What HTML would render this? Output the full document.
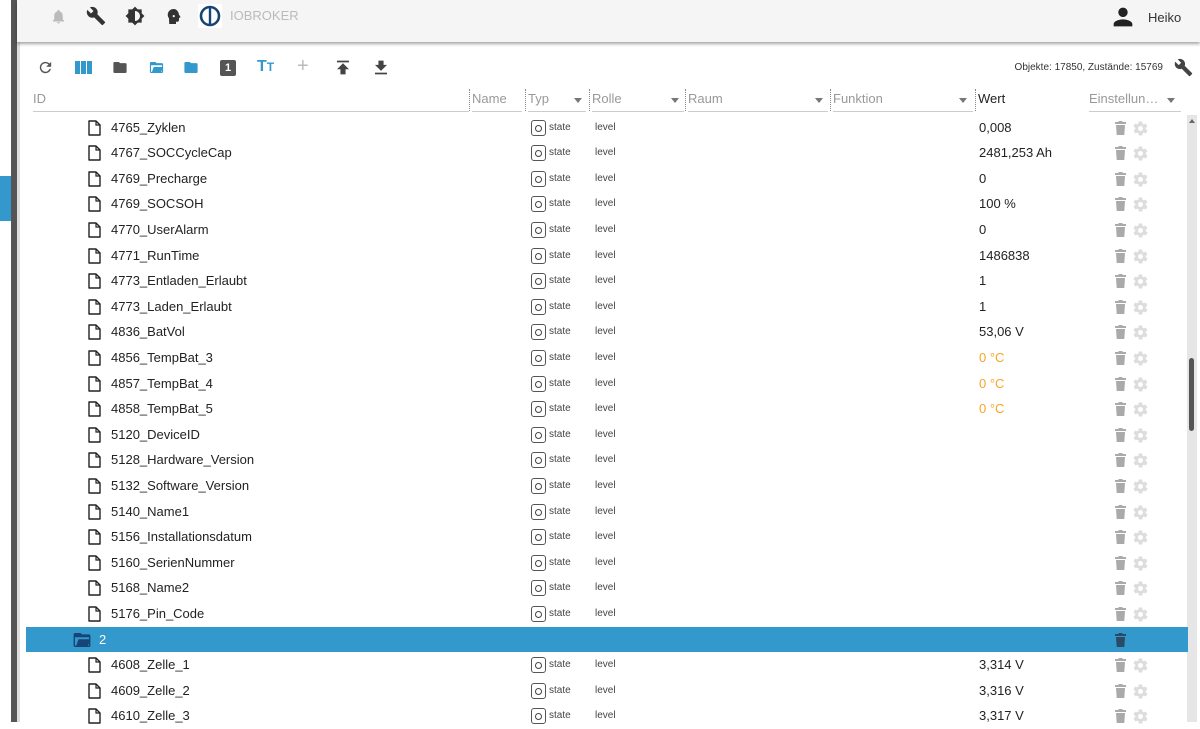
<!DOCTYPE html>
<html><head><meta charset="utf-8">
<style>
*{margin:0;padding:0;box-sizing:border-box}
body{width:1200px;height:722px;overflow:hidden;background:#fff;font-family:"Liberation Sans",sans-serif;position:relative;color:#222}
.a{position:absolute}
.hdr{left:17px;top:0;width:1183px;height:42px;background:#f5f5f5;box-shadow:0 2px 3px rgba(0,0,0,.35)}
.row{position:absolute;left:0;width:1200px;height:25.6px}
.fi{position:absolute;left:88px;top:5px}
.nm{position:absolute;left:111px;top:5px;font-size:13px;color:#222}
.tb{position:absolute;left:531px;top:5px;width:15px;height:16px;border:1px solid #555;border-radius:3px}
.tb:after{content:"";position:absolute;left:3px;top:4px;width:5px;height:5px;border:1px solid #444;border-radius:50%}
.st{position:absolute;left:549px;top:7px;font-size:10px;color:#444}
.lv{position:absolute;left:595px;top:7px;font-size:10px;color:#444}
.vl{position:absolute;left:979px;top:5px;font-size:13px;color:#222}
.tr{position:absolute;left:1115px;top:6px}
.gr{position:absolute;left:1132px;top:5px}
.hd{position:absolute;top:91px;font-size:13px;color:#999;border-bottom:1px solid #ccc;height:21px}
.dv{position:absolute;top:89px;height:22px;border-left:1px dotted #888}
.ar{position:absolute;top:98px;width:0;height:0;border-left:4px solid transparent;border-right:4px solid transparent;border-top:5px solid #777}
</style></head><body>
<div class="a" style="left:0;top:176px;width:11px;height:45px;background:#3399cc"></div>
<div class="a" style="left:11px;top:0;width:6px;height:722px;background:#555"></div>
<div class="a" style="left:17px;top:0;width:3px;height:722px;background:#ddd"></div>
<div class="a hdr"></div>
<svg class="a" style="left:50px;top:7px" width="17" height="19" viewBox="0 0 24 24"><path fill="#bbb" d="M12 22c1.1 0 2-.9 2-2h-4c0 1.1.9 2 2 2zm6-6v-5c0-3.1-1.6-5.6-4.5-6.3V4c0-.8-.7-1.5-1.5-1.5s-1.5.7-1.5 1.5v.7C7.6 5.4 6 7.9 6 11v5l-2 2v1h16v-1l-2-2z"/></svg>
<svg class="a" style="left:86px;top:6px" width="20" height="20" viewBox="0 0 24 24"><path fill="#333" d="M22.7 19l-9.1-9.1c.9-2.3.4-5-1.5-6.9-2-2-5-2.4-7.4-1.3L9 6 6 9 1.6 4.7C.4 7.1.9 10.1 2.9 12.1c1.9 1.9 4.6 2.4 6.9 1.5l9.1 9.1c.4.4 1 .4 1.4 0l2.3-2.3c.5-.4.5-1.1.1-1.4z"/></svg>
<svg class="a" style="left:125px;top:6px" width="20" height="20" viewBox="0 0 24 24"><path fill="#333" d="M20 8.7V4h-4.7L12 .7 8.7 4H4v4.7L.7 12 4 15.3V20h4.7l3.3 3.3 3.3-3.3H20v-4.7l3.3-3.3L20 8.7zM12 18V6c3.3 0 6 2.7 6 6s-2.7 6-6 6z"/></svg>
<svg class="a" style="left:164px;top:6px" width="18" height="21" viewBox="0 0 24 24"><path fill="#333" d="M13 2C8.5 2 5 5.3 5 9.6c0 2 .7 3.4 1.6 4.8L7 22h9v-3h2c1.1 0 2-.9 2-2v-3l1.5-.6c.4-.2.5-.6.3-1L20 9.5C19.4 5.3 16.6 2 13 2zm0 11a1.5 1.5 0 1 1 0-3 1.5 1.5 0 0 1 0 3z"/></svg>
<div class="a" style="left:198px;top:4px;width:24px;height:24px;background:#fff"></div>
<svg class="a" style="left:199px;top:5px" width="22" height="22" viewBox="0 0 22 22"><circle cx="11" cy="11" r="9" fill="none" stroke="#164477" stroke-width="2.6"/><rect x="9.8" y="3" width="2.4" height="16" fill="#164477"/></svg>
<div class="a" style="left:230px;top:8px;font-size:13px;color:#bbb">IOBROKER</div>
<svg class="a" style="left:1109px;top:3px" width="28" height="28" viewBox="0 0 24 24"><path fill="#222" d="M12 12c2.2 0 4-1.8 4-4s-1.8-4-4-4-4 1.8-4 4 1.8 4 4 4zm0 2c-2.7 0-8 1.3-8 4v2h16v-2c0-2.7-5.3-4-8-4z"/></svg>
<div class="a" style="left:1148px;top:10px;font-size:13px;color:#333">Heiko</div>
<svg class="a" style="left:37px;top:59px" width="17" height="17" viewBox="0 0 24 24"><path fill="#555" d="M17.6 6.4A8 8 0 1 0 19.7 14h-2.1A6 6 0 1 1 12 6c1.7 0 3.1.7 4.2 1.8L13 11h7V4l-2.4 2.4z"/></svg>
<svg class="a" style="left:75px;top:61px" width="17" height="13" viewBox="0 0 17 13"><rect x="0" width="5" height="13" fill="#3399cc"/><rect x="6" width="5" height="13" fill="#3399cc"/><rect x="12" width="5" height="13" fill="#3399cc"/></svg>
<svg class="a" style="left:113px;top:62px" width="14" height="11" viewBox="0 0 24 20"><path fill="#555" d="M10 0H2C.9 0 0 .9 0 2v16c0 1.1.9 2 2 2h20c1.1 0 2-.9 2-2V4c0-1.1-.9-2-2-2H12L10 0z"/></svg>
<svg class="a" style="left:149px;top:62px" width="15" height="11" viewBox="0 0 24 20"><path fill="#3399cc" d="M22 2H12L10 0H2C.9 0 0 .9 0 2v16c0 1.1.9 2 2 2h20c1.1 0 2-.9 2-2V4c0-1.1-.9-2-2-2zm0 16H2V6h20v12z"/><path fill="#3399cc" d="M3 20l4-11h17l-4 11z"/></svg>
<svg class="a" style="left:184px;top:62px" width="14" height="11" viewBox="0 0 24 20"><path fill="#3399cc" d="M10 0H2C.9 0 0 .9 0 2v16c0 1.1.9 2 2 2h20c1.1 0 2-.9 2-2V4c0-1.1-.9-2-2-2H12L10 0z"/></svg>
<div class="a" style="left:220px;top:60px;width:16px;height:16px;background:#555;border-radius:2px;color:#fff;font-size:11px;font-weight:bold;text-align:center;line-height:16px">1</div>
<div class="a" style="left:257px;top:58px;font-size:16px;font-weight:bold;color:#3399cc">T<span style="font-size:12px">T</span></div>
<div class="a" style="left:297px;top:55px;font-size:20px;color:#bbb">+</div>
<svg class="a" style="left:337px;top:60px" width="12" height="15" viewBox="0 0 14 16"><rect x="0" y="0" width="14" height="2" fill="#444"/><path fill="#444" d="M7 3L0 10h4v6h6v-6h4z"/></svg>
<svg class="a" style="left:375px;top:60px" width="12" height="15" viewBox="0 0 14 16"><rect x="0" y="14" width="14" height="2" fill="#444"/><path fill="#444" d="M7 12L0 5h4V0h6v5h4z"/></svg>
<div class="a" style="right:37px;top:62px;font-size:10px;color:#333">Objekte: 17850, Zustände: 15769</div>
<svg class="a" style="left:1174px;top:58px" width="19" height="19" viewBox="0 0 24 24"><path fill="#444" d="M22.7 19l-9.1-9.1c.9-2.3.4-5-1.5-6.9-2-2-5-2.4-7.4-1.3L9 6 6 9 1.6 4.7C.4 7.1.9 10.1 2.9 12.1c1.9 1.9 4.6 2.4 6.9 1.5l9.1 9.1c.4.4 1 .4 1.4 0l2.3-2.3c.5-.4.5-1.1.1-1.4z"/></svg>
<div class="hd" style="left:33px;width:436px">ID</div>
<div class="dv" style="left:469px"></div>
<div class="hd" style="left:472px;width:50px">Name</div>
<div class="dv" style="left:525px"></div>
<div class="hd" style="left:528px;width:58px">Typ</div><div class="ar" style="left:574px"></div>
<div class="dv" style="left:589px"></div>
<div class="hd" style="left:592px;width:92px">Rolle</div><div class="ar" style="left:671px"></div>
<div class="dv" style="left:685px"></div>
<div class="hd" style="left:688px;width:140px">Raum</div><div class="ar" style="left:815px"></div>
<div class="dv" style="left:830px"></div>
<div class="hd" style="left:833px;width:140px">Funktion</div><div class="ar" style="left:959px"></div>
<div class="dv" style="left:975px"></div>
<div class="hd" style="left:978px;width:100px;color:#222;border:none">Wert</div>
<div class="hd" style="left:1089px;width:92px">Einstellun…</div><div class="ar" style="left:1167px"></div>
<div class="a" style="left:1187px;top:115px;width:10px;height:607px;background:#e6e6e6"></div>
<div class="a" style="left:1189px;top:119px;width:0;height:0;border-left:3px solid transparent;border-right:3px solid transparent;border-bottom:4px solid #666"></div>
<div class="a" style="left:1189px;top:358px;width:5px;height:73px;background:#555;border-radius:3px"></div>
<div id="rows"></div>
<script>
var rows=[["4765_Zyklen","0,008"],["4767_SOCCycleCap","2481,253 Ah"],["4769_Precharge","0"],["4769_SOCSOH","100 %"],["4770_UserAlarm","0"],["4771_RunTime","1486838"],["4773_Entladen_Erlaubt","1"],["4773_Laden_Erlaubt","1"],["4836_BatVol","53,06 V"],["4856_TempBat_3","0 °C",1],["4857_TempBat_4","0 °C",1],["4858_TempBat_5","0 °C",1],["5120_DeviceID",""],["5128_Hardware_Version",""],["5132_Software_Version",""],["5140_Name1",""],["5156_Installationsdatum",""],["5160_SerienNummer",""],["5168_Name2",""],["5176_Pin_Code",""],null,["4608_Zelle_1","3,314 V"],["4609_Zelle_2","3,316 V"],["4610_Zelle_3","3,317 V"]];
var file='<svg class="fi" width="13" height="16" viewBox="0 0 13 16"><path d="M1 1h7l4 4v10H1z" fill="none" stroke="#222" stroke-width="1.4" stroke-linejoin="round"/><path d="M8 1v4h4" fill="none" stroke="#222" stroke-width="1.2"/></svg>';
var trash=function(c){return '<svg class="tr" width="11" height="14" viewBox="0 0 11 14"><rect x="0" y="1" width="11" height="2" fill="'+c+'"/><rect x="3.5" y="0" width="4" height="1.5" fill="'+c+'"/><path d="M1 4h9l-.7 10H1.7z" fill="'+c+'"/></svg>'};
var gear='<svg class="gr" width="17" height="17" viewBox="0 0 24 24"><path fill="#ddd" d="M19.4 13c0-.3.1-.6.1-1s0-.7-.1-1l2.1-1.6c.2-.2.2-.4.1-.6l-2-3.5c-.1-.2-.4-.3-.6-.2l-2.5 1c-.5-.4-1.1-.7-1.7-1l-.4-2.6c0-.2-.2-.4-.5-.4h-4c-.2 0-.5.2-.5.4l-.4 2.6c-.6.2-1.1.6-1.700 1l-2.5-1c-.2-.1-.5 0-.6.2l-2 3.5c-.1.2 0 .5.1.6L4.6 11c0 .3-.1.6-.1 1s0 .7.1 1l-2.1 1.6c-.2.2-.2.4-.1.6l2 3.5c.1.2.4.3.6.2l2.5-1c.5.4 1.1.7 1.7 1l.4 2.6c0 .2.2.4.5.4h4c.2 0 .5-.2.5-.4l.4-2.6c.6-.2 1.1-.6 1.7-1l2.5 1c.2.1.5 0 .6-.2l2-3.5c.1-.2 0-.5-.1-.6L19.4 13zM12 15.5a3.5 3.5 0 1 1 0-7 3.5 3.5 0 0 1 0 7z"/></svg>';
var h='';
rows.forEach(function(r,i){var top=114.5+i*25.6;
if(!r){h+='<div class="row" style="top:'+(top+0.5)+'px;left:26px;width:1162px;background:#3399cc;height:25px"><svg style="position:absolute;left:46px;top:6px" width="20" height="14" viewBox="0 0 24 20"><path fill="#164477" d="M22 2H12L10 0H2C.9 0 0 .9 0 2v16c0 1.1.9 2 2 2h20c1.1 0 2-.9 2-2V4c0-1.1-.9-2-2-2zm0 16H2V6h20v12z"/><path fill="#164477" d="M3 20l4-11h17l-4 11z"/></svg><div style="position:absolute;left:73px;top:5px;color:#fff;font-size:13px">2</div><div style="position:absolute;left:-26px;top:0">'+trash('#2a4a66')+'</div></div>';return;}
h+='<div class="row" style="top:'+top+'px">'+file+'<div class="nm">'+r[0]+'</div><div class="tb"></div><div class="st">state</div><div class="lv">level</div><div class="vl"'+(r[2]?' style="color:#f5a623"':'')+'>'+r[1]+'</div>'+trash('#aaa')+gear+'</div>';});
document.getElementById('rows').innerHTML=h;
</script>
</body></html>
